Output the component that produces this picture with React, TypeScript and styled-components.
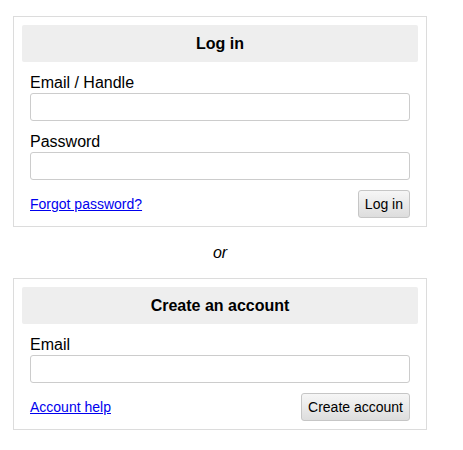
import styled, { createGlobalStyle } from 'styled-components'

const GlobalStyle = createGlobalStyle`
    body {
        margin: 0;
        font-family: "Liberation Sans", Arial, sans-serif;
        color: #000;
        background: #fff;
    }
`;

const Page = styled.div`
    width: 414px;
    padding: 16px 0 0 13px;
`;

const Panel = styled.div`
    border: 1px solid #dcdcdc;
    padding: 8px;
`;

const PanelHeader = styled.div`
    height: 37px;
    display: flex;
    align-items: center;
    justify-content: center;
    background-color: #eeeeee;
    border-radius: 2px;
    font-size: 16px;
    font-weight: bold;
`;

const PanelBody = styled.div`
    padding: 0 8px;
`;

const Field = styled.div`
    margin-top: 12px;
    display: flex;
    flex-direction: column;
    gap: 1px;

    & > label {
        font-size: 16px;
        line-height: 18px;
    }
`;

const TextInput = styled.input`
    box-sizing: border-box;
    height: 28px;
    width: 100%;
    border: 1px solid #cccccc;
    border-radius: 3px;
    padding: 0 6px;
    font-family: inherit;
    font-size: 14px;
    outline: none;
`;

const Footer = styled.div`
    margin-top: 10px;
    display: flex;
    align-items: center;
    justify-content: space-between;

    & > a {
        font-size: 14px;
        color: #0000ee;
        text-decoration: underline;
    }
`;

const Button = styled.button`
    box-sizing: border-box;
    height: 28px;
    padding: 0 6px;
    border: 1px solid #c6c6c6;
    border-radius: 3px;
    background: linear-gradient(#f6f6f6, #dddddd);
    font-family: inherit;
    font-size: 14px;
    color: #000;
    cursor: pointer;
`;

const Or = styled.div`
    height: 51px;
    display: flex;
    align-items: center;
    justify-content: center;
    font-size: 16px;
    font-style: italic;
`;

export default function App() {
    return (
        <>
            <GlobalStyle />
            <Page>
                <Panel>
                    <PanelHeader>Log in</PanelHeader>
                    <PanelBody>
                        <Field>
                            <label htmlFor='handle'>Email / Handle</label>
                            <TextInput id='handle' type='text' autoFocus />
                        </Field>
                        <Field>
                            <label htmlFor='password'>Password</label>
                            <TextInput id='password' type='password' />
                        </Field>
                        <Footer>
                            <a href='#'>Forgot password?</a>
                            <Button>Log in</Button>
                        </Footer>
                    </PanelBody>
                </Panel>
                <Or>or</Or>
                <Panel>
                    <PanelHeader>Create an account</PanelHeader>
                    <PanelBody>
                        <Field>
                            <label htmlFor='email'>Email</label>
                            <TextInput id='email' type='email' />
                        </Field>
                        <Footer>
                            <a href='#'>Account help</a>
                            <Button>Create account</Button>
                        </Footer>
                    </PanelBody>
                </Panel>
            </Page>
        </>
    )
}
